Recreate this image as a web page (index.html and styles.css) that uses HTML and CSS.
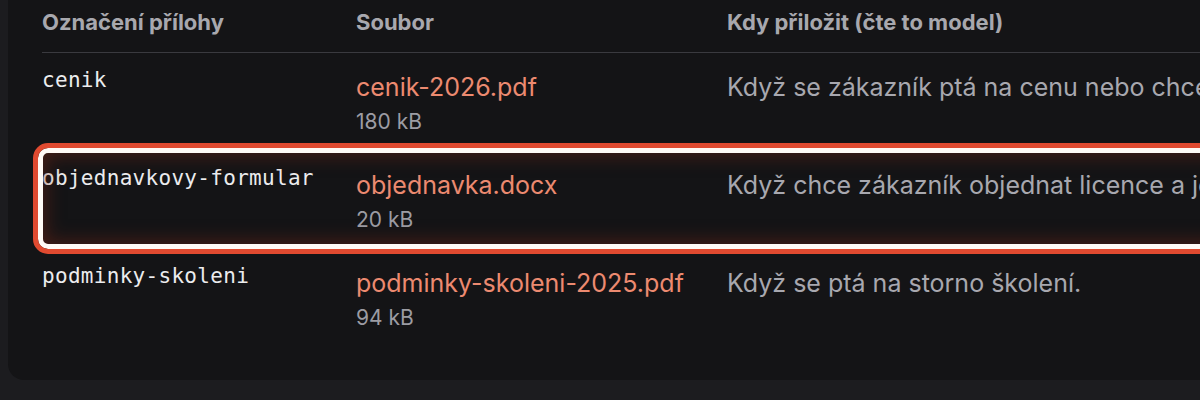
FILE: index.html
```html
<!DOCTYPE html>
<html lang="cs">
<head>
<meta charset="utf-8">
<link rel="stylesheet" href="styles.css">
</head>
<body>
<div class="card">
  <div class="table">
    <div class="row head">
      <div class="cell">Označení přílohy</div>
      <div class="cell">Soubor</div>
      <div class="cell">Kdy přiložit (čte to model)</div>
    </div>
    <div class="row">
      <div class="cell key">cenik</div>
      <div class="cell file"><div class="name">cenik-2026.pdf</div><div class="size">180 kB</div></div>
      <div class="cell desc">Když se zákazník ptá na cenu nebo chce</div>
    </div>
    <div class="row marked">
      <div class="cell key">objednavkovy-formular</div>
      <div class="cell file"><div class="name">objednavka.docx</div><div class="size">20 kB</div></div>
      <div class="cell desc">Když chce zákazník objednat licence a je</div>
      <div class="highlight"></div>
    </div>
    <div class="row">
      <div class="cell key">podminky-skoleni</div>
      <div class="cell file"><div class="name">podminky-skoleni-2025.pdf</div><div class="size">94 kB</div></div>
      <div class="cell desc">Když se ptá na storno školení.</div>
    </div>
  </div>
</div>
</body>
</html>
```
FILE: styles.css
```css
html, body {
  margin: 0;
  padding: 0;
  background: #1c1c1f;
  overflow: hidden;
  width: 1200px;
  height: 400px;
}
body {
  font-family: Inter, "Noto Sans", sans-serif;
  color: #a9a9b0;
}
.card {
  margin: -40px 0 0 8px;
  width: 1500px;
  background: #141416;
  border-radius: 16px;
  padding: 38px 0 33px 34px;
}
.table {
  display: flex;
  flex-direction: column;
}
.row {
  display: grid;
  grid-template-columns: 314px 371px 1fr;
  position: relative;
}
.cell {
  white-space: nowrap;
}
.head {
  border-bottom: 1px solid #3a3a3f;
}
.head .cell {
  font-size: 22px;
  font-weight: 700;
  line-height: 28px;
  padding: 10px 0 16px;
  color: #a8a8ae;
}
.row:not(.head) .cell {
  padding: 19px 0 0;
  height: 98px;
  box-sizing: border-box;
}
.row:not(.head) .key {
  font-family: "DejaVu Sans Mono", monospace;
  font-size: 21px;
  letter-spacing: 0.3px;
  color: #ececee;
  line-height: 28px;
  padding-top: 13px;
}
.name {
  font-size: 25px;
  line-height: 30px;
  color: #ec8a70;
}
.size {
  font-size: 21px;
  line-height: 26px;
  margin-top: 7px;
  color: #9c9ca3;
}
.desc {
  font-size: 25px;
  line-height: 30px;
  color: #a8a8af;
}
.highlight {
  position: absolute;
  left: -9px;
  top: -8px;
  bottom: -5px;
  right: -20px;
  border: 5px solid #e04a30;
  border-radius: 15px;
  box-shadow: inset 0 0 0 5px #fffaf6, inset 0 0 18px 8px rgba(120, 38, 22, 0.5);
  pointer-events: none;
}
```
